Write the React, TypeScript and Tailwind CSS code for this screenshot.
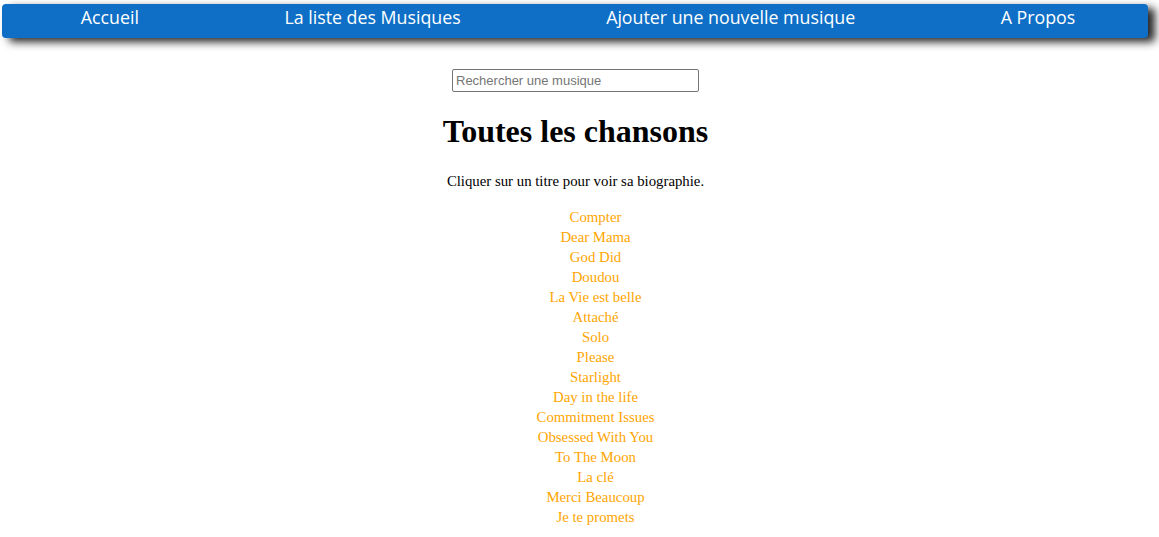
import React from "react";

const songs = [
  "Compter",
  "Dear Mama",
  "God Did",
  "Doudou",
  "La Vie est belle",
  "Attaché",
  "Solo",
  "Please",
  "Starlight",
  "Day in the life",
  "Commitment Issues",
  "Obsessed With You",
  "To The Moon",
  "La clé",
  "Merci Beaucoup",
  "Je te promets",
];

const navItems = ["Accueil", "La liste des Musiques", "Ajouter une nouvelle musique", "A Propos"];

export default function App() {
  return (
    <div className="min-h-screen bg-white">
      <nav className="mx-[2px] mt-[4px] w-[1146px] h-[34px] rounded-[4px] bg-[#0f6fc6] shadow-[7px_4px_8px_rgba(0,0,0,0.85)] flex items-center justify-around pb-[8px] pl-[6px]">
        {navItems.map((n) => (
          <span
            key={n}
            className="text-white text-[17.8px] leading-[22px] font-['Open_Sans',sans-serif]"
          >
            {n}
          </span>
        ))}
      </nav>
      <div className="w-[1151px] flex flex-col items-center font-['Liberation_Serif',serif] text-black">
        <input
          type="text"
          placeholder="Rechercher une musique"
          className="mt-[31px] w-[247px] h-[23px] border border-[#767676] rounded-[2px] px-[3px] text-[13px] font-['Liberation_Sans',sans-serif] placeholder:text-[#757575] outline-none"
        />
        <h1 className="mt-[21px] text-[32px] leading-[37px] font-bold">Toutes les chansons</h1>
        <p className="mt-[22px] text-[14.8px] leading-[18px]">Cliquer sur un titre pour voir sa biographie.</p>
        <ul className="mt-[17px] pl-[40px] flex flex-col items-center text-[14.8px] leading-[20px] text-[#ffa500]">
          {songs.map((s) => (
            <li key={s} className="text-center">
              {s}
            </li>
          ))}
        </ul>
      </div>
    </div>
  );
}
